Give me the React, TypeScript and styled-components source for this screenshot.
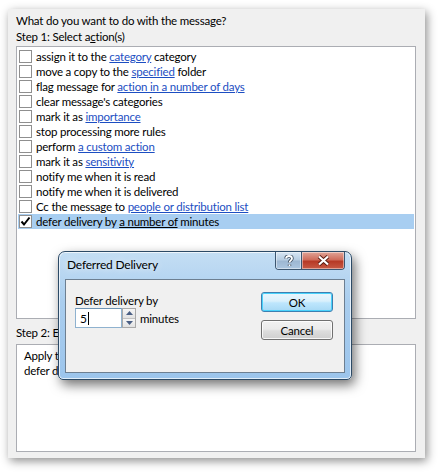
import React from "react";
import styled, { createGlobalStyle } from "styled-components";

const font = `Lato, "Open Sans", "Noto Sans", sans-serif`;

const GlobalStyle = createGlobalStyle`
  html, body {
    margin: 0;
    padding: 0;
    background: #ffffff;
  }
  body {
    font-family: ${font};
    font-size: 11.5px;
    letter-spacing: -0.2px;
    color: #000;
  }
`;

const Page = styled.div`
  position: relative;
  width: 439px;
  height: 472px;
  padding: 9px 14px 14px 8px;
  box-sizing: border-box;
  overflow: hidden;
`;

const Panel = styled.div`
  width: 417px;
  height: 449px;
  box-sizing: border-box;
  background: #f0f0f0;
  box-shadow: 2px 3px 9px rgba(0, 0, 0, 0.45);
  padding: 4px 9px 6px 8px;
  display: flex;
  flex-direction: column;
`;

const Label = styled.div<{ $gap?: number; $h?: number }>`
  height: ${(p) => p.$h ?? 16}px;
  line-height: ${(p) => p.$h ?? 16}px;
  margin-top: ${(p) => p.$gap ?? 0}px;
  white-space: nowrap;
`;

const ListBox = styled.div<{ $height: number; $gap?: number }>`
  margin-top: ${(p) => p.$gap ?? 1}px;
  height: ${(p) => p.$height}px;
  box-sizing: border-box;
  border: 1px solid #abadb3;
  background: #fff;
  padding: 2px 1px 0 1px;
  display: flex;
  flex-direction: column;
`;

const Row = styled.div<{ $selected?: boolean }>`
  height: 15px;
  display: flex;
  align-items: center;
  gap: 4px;
  padding-left: 1px;
  background: ${(p) => (p.$selected ? "#a8cef1" : "transparent")};
  white-space: nowrap;
`;

const Check = styled.span`
  width: 13px;
  height: 13px;
  box-sizing: border-box;
  border: 1px solid #8f8f8f;
  background: #fff;
  display: flex;
  align-items: center;
  justify-content: center;
  flex: none;
`;

const Link = styled.span`
  color: #1c4ec2;
  text-decoration: underline;
`;

const Plain = styled.span<{ $dark?: boolean }>`
  color: #000;
  text-decoration: ${(p) => (p.$dark ? "underline" : "none")};
`;

const Para = styled.div`
  padding: 1px 0 0 6px;
  line-height: 15px;
  white-space: nowrap;
`;

/* dialog */

const Dialog = styled.div`
  position: absolute;
  left: 58px;
  top: 251px;
  width: 294px;
  height: 129px;
  box-sizing: border-box;
  border: 1px solid #2c4a66;
  border-radius: 7px 7px 5px 5px;
  background: linear-gradient(180deg, #c4def4 0%, #a9cdee 40%, #9cc5ec 100%);
  box-shadow: inset 0 0 0 1px rgba(255, 255, 255, 0.7), 3px 5px 12px rgba(0, 0, 0, 0.55);
  padding: 0 6px 6px 6px;
  display: flex;
  flex-direction: column;
`;

const TitleBar = styled.div`
  height: 27px;
  display: flex;
  align-items: flex-start;
  justify-content: space-between;
`;

const Title = styled.div`
  margin-top: 6px;
  margin-left: 2px;
  font-size: 12px;
  line-height: 14px;
  color: #000;
  text-shadow: 0 0 6px rgba(255, 255, 255, 0.9);
`;

const Caption = styled.div`
  display: flex;
  border: 1px solid #3c5670;
  border-top: none;
  border-radius: 0 0 4px 4px;
  overflow: hidden;
  height: 17px;
`;

const CapButton = styled.div<{ $close?: boolean; $w: number }>`
  width: ${(p) => p.$w}px;
  height: 17px;
  display: flex;
  align-items: center;
  justify-content: center;
  box-shadow: inset 0 0 0 1px rgba(255, 255, 255, 0.45);
  background: ${(p) =>
    p.$close
      ? "linear-gradient(180deg, #e0a598 0%, #cf6d5c 45%, #b73a26 55%, #c75a45 100%)"
      : "linear-gradient(180deg, #d8e6f3 0%, #b7cde2 45%, #9db7d2 55%, #acc6e0 100%)"};
  & + & {
    border-left: 1px solid #3c5670;
  }
`;

const Client = styled.div`
  flex: 1;
  box-sizing: border-box;
  border: 1px solid #6d7f91;
  background: #f0f0f0;
  display: flex;
  justify-content: space-between;
  padding: 14px 11px 0 9px;
`;

const Form = styled.div`
  display: flex;
  flex-direction: column;
  gap: 0;
`;

const FieldRow = styled.div`
  display: flex;
  align-items: center;
  gap: 4px;
`;

const Input = styled.div`
  width: 47px;
  height: 20px;
  box-sizing: border-box;
  border: 1px solid #8fb2cf;
  border-top-color: #6f94b4;
  background: #fff;
  display: flex;
  align-items: center;
  padding-left: 4px;
  font-size: 12px;
`;

const Caret = styled.span`
  display: inline-block;
  width: 1px;
  height: 13px;
  background: #000;
  margin-left: 1px;
`;

const Spin = styled.div`
  width: 14px;
  height: 20px;
  box-sizing: border-box;
  border: 1px solid #a9a9a9;
  display: flex;
  flex-direction: column;
  margin-left: -4px;
`;

const SpinHalf = styled.div`
  flex: 1;
  display: flex;
  align-items: center;
  justify-content: center;
  background: linear-gradient(180deg, #f6f6f6, #e2e2e2);
  & + & {
    border-top: 1px solid #c2c2c2;
  }
`;

const Buttons = styled.div`
  display: flex;
  flex-direction: column;
  gap: 8px;
  margin-top: -2px;
`;

const Button = styled.div<{ $default?: boolean }>`
  width: 72px;
  height: 20px;
  box-sizing: border-box;
  border-radius: 3px;
  display: flex;
  align-items: center;
  justify-content: center;
  border: 1px solid ${(p) => (p.$default ? "#3c7fb1" : "#707070")};
  background: ${(p) =>
    p.$default
      ? "linear-gradient(180deg, #eaf6fd 0%, #d9f0fc 45%, #bee6fd 55%, #a7d9f5 100%)"
      : "linear-gradient(180deg, #f2f2f2 0%, #ebebeb 45%, #dddddd 55%, #cfcfcf 100%)"};
  box-shadow: ${(p) =>
    p.$default
      ? "inset 0 0 0 1px #49d2fb"
      : "inset 0 0 0 1px rgba(255,255,255,0.8)"};
`;

type Part = { t: string; link?: boolean; under?: boolean };

const rows: { parts: Part[]; checked?: boolean }[] = [
  { parts: [{ t: "assign it to the " }, { t: "category", link: true }, { t: " category" }] },
  { parts: [{ t: "move a copy to the " }, { t: "specified", link: true }, { t: " folder" }] },
  { parts: [{ t: "flag message for " }, { t: "action in a number of days", link: true }] },
  { parts: [{ t: "clear message's categories" }] },
  { parts: [{ t: "mark it as " }, { t: "importance", link: true }] },
  { parts: [{ t: "stop processing more rules" }] },
  { parts: [{ t: "perform " }, { t: "a custom action", link: true }] },
  { parts: [{ t: "mark it as " }, { t: "sensitivity", link: true }] },
  { parts: [{ t: "notify me when it is read" }] },
  { parts: [{ t: "notify me when it is delivered" }] },
  { parts: [{ t: "Cc the message to " }, { t: "people or distribution list", link: true }] },
  {
    parts: [{ t: "defer delivery by " }, { t: "a number of", under: true }, { t: " minutes" }],
    checked: true,
  },
];

const CheckMark = () => (
  <svg width="11" height="11" viewBox="0 0 11 11">
    <path d="M1.5 5.5 L4 8.5 L9.5 1.5" fill="none" stroke="#000" strokeWidth="2" />
  </svg>
);

const Arrow = ({ up }: { up?: boolean }) => (
  <svg width="7" height="4" viewBox="0 0 7 4">
    <path d={up ? "M0 4 L3.5 0 L7 4 Z" : "M0 0 L3.5 4 L7 0 Z"} fill="#4a5f84" />
  </svg>
);

const HelpGlyph = () => (
  <svg width="10" height="12" viewBox="0 0 10 12">
    <path
      d="M2 3.5 C2 1.5 3.5 1 5 1 C6.8 1 8 2 8 3.5 C8 5.2 5.5 5.5 5.5 7.5 M5.5 9.5 L5.5 11"
      fill="none"
      stroke="#3a4a5c"
      strokeWidth="3.4"
    />
    <path
      d="M2 3.5 C2 1.5 3.5 1 5 1 C6.8 1 8 2 8 3.5 C8 5.2 5.5 5.5 5.5 7.5 M5.5 9.5 L5.5 11"
      fill="none"
      stroke="#fff"
      strokeWidth="1.8"
    />
  </svg>
);

const CloseGlyph = () => (
  <svg width="13" height="11" viewBox="0 0 13 11">
    <path d="M2 1.5 L11 9.5 M11 1.5 L2 9.5" fill="none" stroke="#5a1e14" strokeWidth="4" />
    <path d="M2 1.5 L11 9.5 M11 1.5 L2 9.5" fill="none" stroke="#fff" strokeWidth="2.2" />
  </svg>
);

export default function App() {
  return (
    <>
      <GlobalStyle />
      <Page>
        <Panel>
          <Label>What do you want to do with the message?</Label>
          <Label>
            Step 1: Select a<u>c</u>tion(s)
          </Label>
          <ListBox $height={274}>
            {rows.map((r, i) => (
              <Row key={i} $selected={r.checked}>
                <Check>{r.checked && <CheckMark />}</Check>
                <span>
                  {r.parts.map((p, j) =>
                    p.link ? (
                      <Link key={j}>{p.t}</Link>
                    ) : (
                      <Plain key={j} $dark={p.under}>
                        {p.t}
                      </Plain>
                    )
                  )}
                </span>
              </Row>
            ))}
          </ListBox>
          <Label $gap={6}>Step 2: Edit the rule description</Label>
          <ListBox $height={108} $gap={3}>
            <Para>
              Apply this rule after the message arrives
              <br />
              defer delivery by <Link>a number of</Link> minutes
            </Para>
          </ListBox>
        </Panel>

        <Dialog>
          <TitleBar>
            <Title>Deferred Delivery</Title>
            <Caption>
              <CapButton $w={25}>
                <HelpGlyph />
              </CapButton>
              <CapButton $w={42} $close>
                <CloseGlyph />
              </CapButton>
            </Caption>
          </TitleBar>
          <Client>
            <Form>
              <Label $h={14}>Defer delivery by</Label>
              <FieldRow>
                <Input>
                  5<Caret />
                </Input>
                <Spin>
                  <SpinHalf>
                    <Arrow up />
                  </SpinHalf>
                  <SpinHalf>
                    <Arrow />
                  </SpinHalf>
                </Spin>
                <span>minutes</span>
              </FieldRow>
            </Form>
            <Buttons>
              <Button $default>OK</Button>
              <Button>Cancel</Button>
            </Buttons>
          </Client>
        </Dialog>
      </Page>
    </>
  );
}
